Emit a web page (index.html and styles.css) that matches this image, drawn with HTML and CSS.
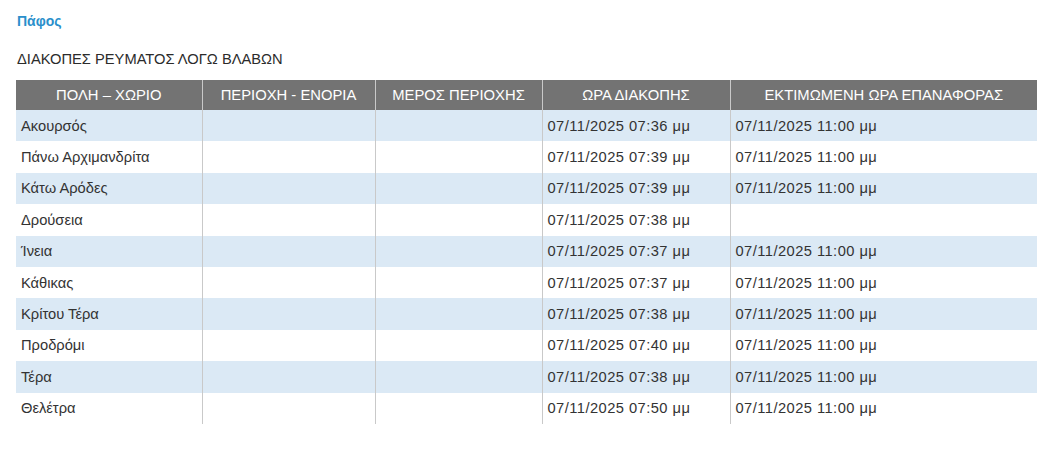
FILE: index.html
```html
<!DOCTYPE html>
<html lang="el">
<head>
<meta charset="utf-8">
<title>Πάφος</title>
<link rel="stylesheet" href="styles.css">
</head>
<body>
<div class="page">
  <h2 class="district">Πάφος</h2>
  <p class="subtitle">ΔΙΑΚΟΠΕΣ ΡΕΥΜΑΤΟΣ ΛΟΓΩ ΒΛΑΒΩΝ</p>
  <table class="outages">
    <colgroup>
      <col class="c1"><col class="c2"><col class="c3"><col class="c4"><col class="c5">
    </colgroup>
    <thead>
      <tr>
        <th>ΠΟΛΗ – ΧΩΡΙΟ</th>
        <th>ΠΕΡΙΟΧΗ - ΕΝΟΡΙΑ</th>
        <th>ΜΕΡΟΣ ΠΕΡΙΟΧΗΣ</th>
        <th>ΩΡΑ ΔΙΑΚΟΠΗΣ</th>
        <th>ΕΚΤΙΜΩΜΕΝΗ ΩΡΑ ΕΠΑΝΑΦΟΡΑΣ</th>
      </tr>
    </thead>
    <tbody>
      <tr><td>Ακουρσός</td><td></td><td></td><td class="date">07/11/2025 07:36 μμ</td><td class="date">07/11/2025 11:00 μμ</td></tr>
      <tr><td>Πάνω Αρχιμανδρίτα</td><td></td><td></td><td class="date">07/11/2025 07:39 μμ</td><td class="date">07/11/2025 11:00 μμ</td></tr>
      <tr><td>Κάτω Αρόδες</td><td></td><td></td><td class="date">07/11/2025 07:39 μμ</td><td class="date">07/11/2025 11:00 μμ</td></tr>
      <tr><td>Δρούσεια</td><td></td><td></td><td class="date">07/11/2025 07:38 μμ</td><td class="date"></td></tr>
      <tr><td>Ίνεια</td><td></td><td></td><td class="date">07/11/2025 07:37 μμ</td><td class="date">07/11/2025 11:00 μμ</td></tr>
      <tr><td>Κάθικας</td><td></td><td></td><td class="date">07/11/2025 07:37 μμ</td><td class="date">07/11/2025 11:00 μμ</td></tr>
      <tr><td>Κρίτου Τέρα</td><td></td><td></td><td class="date">07/11/2025 07:38 μμ</td><td class="date">07/11/2025 11:00 μμ</td></tr>
      <tr><td>Προδρόμι</td><td></td><td></td><td class="date">07/11/2025 07:40 μμ</td><td class="date">07/11/2025 11:00 μμ</td></tr>
      <tr><td>Τέρα</td><td></td><td></td><td class="date">07/11/2025 07:38 μμ</td><td class="date">07/11/2025 11:00 μμ</td></tr>
      <tr><td>Θελέτρα</td><td></td><td></td><td class="date">07/11/2025 07:50 μμ</td><td class="date">07/11/2025 11:00 μμ</td></tr>
    </tbody>
  </table>
</div>
</body>
</html>
```

FILE: styles.css
```css
html, body {
  margin: 0;
  padding: 0;
  background: #ffffff;
}
body {
  font-family: "Liberation Sans", Arial, sans-serif;
  color: #333333;
  font-size: 14.7px;
}
.page {
  padding: 12px 17px 0 16px;
}
.district {
  margin: 0;
  padding-left: 1px;
  font-size: 14px;
  font-weight: bold;
  color: #2a8fcb;
  line-height: 18px;
}
.subtitle {
  margin: 20px 0 0 0;
  padding-left: 1px;
  font-size: 14.7px;
  line-height: 18px;
  color: #2b2b2b;
}
.outages {
  margin-top: 12px;
  width: 1021px;
  border-collapse: collapse;
  table-layout: fixed;
}
.c1 { width: 186px; }
.c2 { width: 173px; }
.c3 { width: 167px; }
.c4 { width: 188px; }
.c5 { width: 307px; }
.outages th {
  background: #737373;
  color: #ffffff;
  font-weight: normal;
  font-size: 14.8px;
  height: 30px;
  padding: 0 4px;
  text-align: center;
  border-left: 1px solid #c9c9c9;
  white-space: nowrap;
}
.outages th:first-child {
  border-left: none;
}
.outages td {
  height: 31.4px;
  padding: 0 5px;
  font-size: 14.7px;
  color: #333333;
  border-left: 1px solid #c9c9c9;
  white-space: nowrap;
  box-sizing: border-box;
}
.outages td.date {
  letter-spacing: 0.45px;
}
.outages td:first-child {
  border-left: none;
}
.outages tbody tr:nth-child(odd) td {
  background: #dbe9f5;
}
```
